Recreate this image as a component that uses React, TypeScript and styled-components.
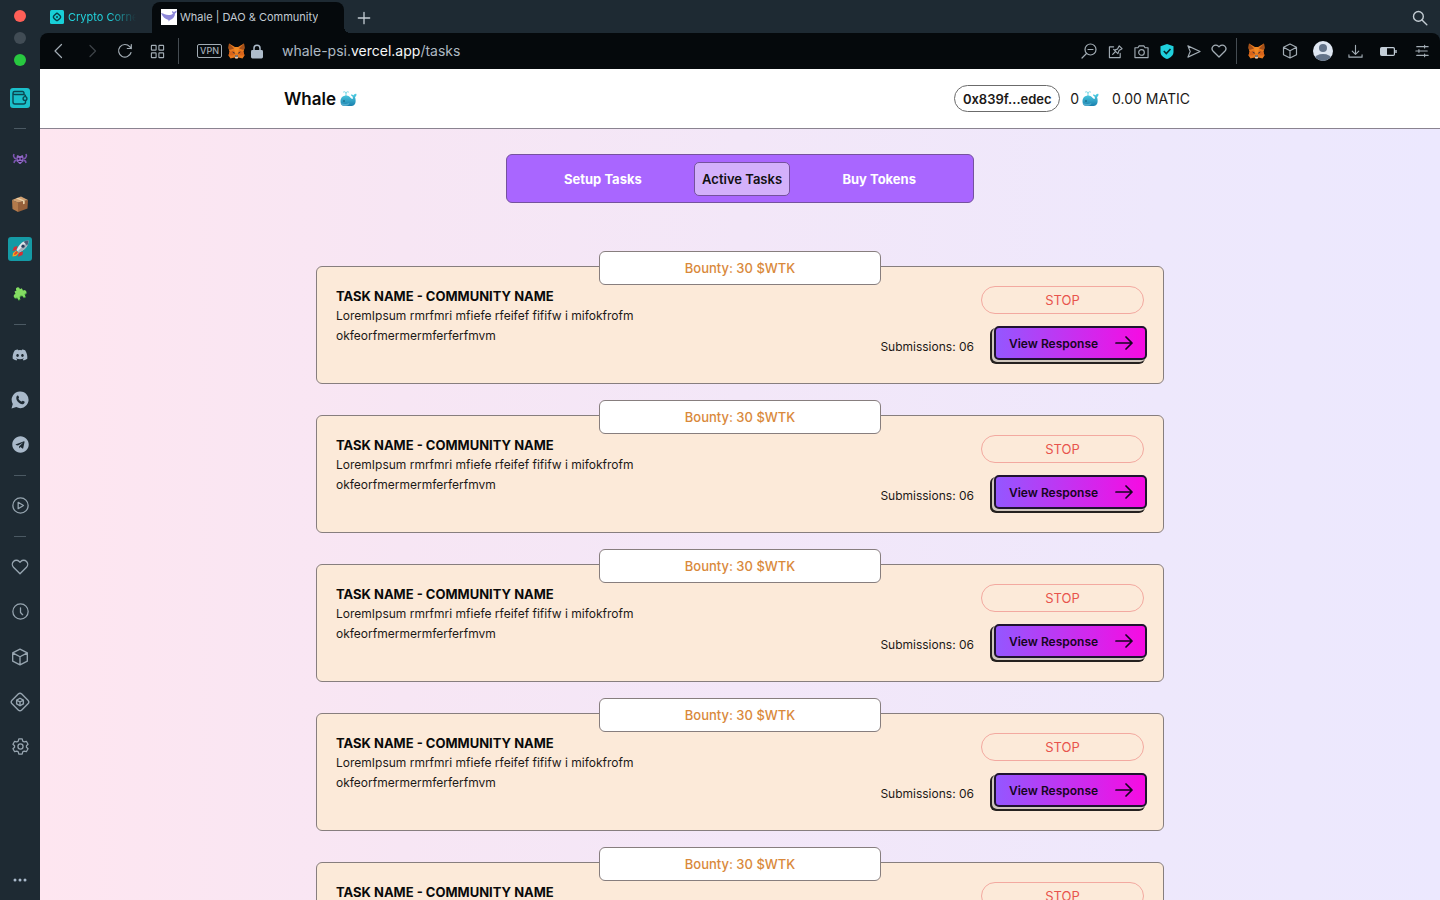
import React from 'react';
import styled, { createGlobalStyle, css } from 'styled-components';
import { FaDiscord, FaTelegram } from 'react-icons/fa';

const GlobalStyle = createGlobalStyle`
  *, *::before, *::after { box-sizing: border-box; }
  body {
    margin: 0;
    font-family: Inter, 'Liberation Sans', sans-serif;
    font-size: 13px;
    color: #1c1917;
    background: #1e2a33;
  }
  button { font: inherit; color: inherit; margin: 0; padding: 0; border: 0; background: none; cursor: pointer; }
  a { color: inherit; text-decoration: none; }
  h1, h2, p, ul { margin: 0; padding: 0; }
  ul { list-style: none; }
  svg { display: block; flex-shrink: 0; }
`;

/* ---------- browser frame ---------- */

const Shell = styled.div`
  display: flex;
  height: 100vh;
  overflow: hidden;
`;

const Rail = styled.aside`
  flex: 0 0 40px;
  display: flex;
  flex-direction: column;
  align-items: center;
  background: #1e2a33;
  color: #97a5b0;
`;

const TrafficLights = styled.div`
  display: flex;
  flex-direction: column;
  gap: 10px;
  padding: 10px 0 9px;
`;

const Light = styled.button<{ $color: string }>`
  width: 12px;
  height: 12px;
  border-radius: 50%;
  background: ${(p) => p.$color};
`;

const RailNav = styled.nav`
  flex: 1;
  display: flex;
  flex-direction: column;
  align-items: center;
  width: 100%;
`;

const RailButton = styled.button`
  display: grid;
  place-items: center;
  width: 40px;
  height: 45px;
`;

const RailTile = styled.span<{ $size: number; $bg: string }>`
  display: grid;
  place-items: center;
  width: ${(p) => p.$size}px;
  height: ${(p) => p.$size}px;
  border-radius: 3px;
  background: ${(p) => p.$bg};
`;

const RailRule = styled.hr`
  width: 12px;
  height: 1px;
  margin: 8px 0 7px;
  border: 0;
  background: #4b5963;
`;

const RailMore = styled(RailButton)`
  height: 40px;
  margin-top: auto;
`;

const Column = styled.div`
  flex: 1;
  min-width: 0;
  display: flex;
  flex-direction: column;
`;

const TabStrip = styled.div`
  flex: 0 0 33px;
  display: flex;
  align-items: flex-end;
  color: #c3ccd3;
  font-size: 11px;
`;

const BrowserTab = styled.a<{ $active?: boolean }>`
  position: relative;
  display: flex;
  align-items: center;
  gap: 4px;
  height: 31px;
  white-space: nowrap;
  ${(p) =>
    p.$active
      ? css`
          width: 192px;
          padding: 0 0 1px 9px;
          gap: 3px;
          border-radius: 8px 8px 0 0;
          background: #05090c;
          &::after {
            content: '';
            position: absolute;
            left: 100%;
            bottom: 0;
            width: 6px;
            height: 6px;
            background: radial-gradient(circle at 100% 0, transparent 6px, #05090c 6px);
          }
        `
      : css`
          width: 112px;
          padding: 0 16px 1px 10px;
          color: #22d3dc;
        `}
`;

const TabTitle = styled.span<{ $fade?: boolean }>`
  overflow: hidden;
  line-height: 20px;
  ${(p) => p.$fade && 'mask-image: linear-gradient(90deg, #000 60%, transparent);'}
`;

const StripButton = styled.button<{ $end?: boolean }>`
  display: grid;
  place-items: center;
  width: 40px;
  height: 31px;
  ${(p) => p.$end && 'margin-left: auto;'}
`;

const Toolbar = styled.div`
  flex: 0 0 36px;
  display: flex;
  align-items: center;
  padding: 0 2px;
  border-radius: 8px 8px 0 0;
  background: #05090c;
  color: #a3adb5;
`;

const ToolButton = styled.button<{ $w: number; $dim?: boolean }>`
  display: grid;
  place-items: center;
  width: ${(p) => p.$w}px;
  height: 32px;
  opacity: ${(p) => (p.$dim ? 0.35 : 1)};
`;

const ToolDivider = styled.span`
  width: 1px;
  height: 26px;
  margin: 0 3px 0 4px;
  background: #454c52;
`;

const VpnBadge = styled.button`
  width: 25px;
  height: 14px;
  margin-left: 15px;
  border: 1px solid #a3adb5;
  border-radius: 2px;
  font-size: 9px;
  font-weight: 500;
  line-height: 12px;
`;

const SiteBadges = styled.div`
  display: flex;
  align-items: center;
  gap: 6px;
  padding: 0 19px 0 6px;
`;

const Address = styled.button`
  flex: 1;
  min-width: 0;
  overflow: hidden;
  text-align: left;
  white-space: nowrap;
  font-size: 14px;
  line-height: 20px;
  color: #aeb9c3;
`;

const Domain = styled.span`
  color: #f5f7f8;
`;

/* ---------- page ---------- */

const Page = styled.div`
  flex: 1;
  overflow-y: auto;
  scrollbar-width: none;
  background: linear-gradient(90deg, #fee6f0 0%, #f7e6f4 26%, #f3e7f8 50%, #eee8fc 80%, #ece8fe 100%);
`;

const PageHeader = styled.header`
  display: flex;
  justify-content: center;
  border-bottom: 1px solid #8a8390;
  background: #fff;
`;

const HeaderInner = styled.div`
  flex: 1;
  max-width: 912px;
  height: 59px;
  display: flex;
  align-items: center;
  justify-content: space-between;
  padding-right: 6px;
`;

const Brand = styled.a`
  display: flex;
  align-items: center;
  gap: 4px;
  font-size: 17px;
  font-weight: 600;
  color: #0a0a0a;
`;

const Account = styled.div`
  display: flex;
  align-items: center;
  font-size: 14px;
`;

const WalletPill = styled.button`
  min-width: 106px;
  height: 27px;
  margin-right: 10px;
  padding: 0 7px;
  border: 1px solid #6b6b6b;
  border-radius: 14px;
  font-size: 13px;
  font-weight: 600;
`;

const Balance = styled.span`
  display: flex;
  align-items: center;
  gap: 3px;
  margin-right: 13px;
`;

const Content = styled.main`
  display: flex;
  flex-direction: column;
  align-items: center;
  padding: 25px 20px 40px;
`;

const TabBar = styled.nav`
  display: flex;
  align-items: center;
  justify-content: space-between;
  width: 100%;
  max-width: 468px;
  padding: 7px 49px 6px;
  border: 1px solid #75529e;
  border-radius: 6px;
  background: #a966ff;
`;

const TaskTab = styled.a<{ $active?: boolean }>`
  padding: 6px 7px;
  border: 1px solid ${(p) => (p.$active ? '#75529e' : 'transparent')};
  border-radius: 5px;
  background: ${(p) => (p.$active ? '#d3b0fb' : 'transparent')};
  color: ${(p) => (p.$active ? '#111' : '#fff')};
  font-weight: ${(p) => (p.$active ? 600 : 700)};
  line-height: 20px;
  text-align: center;
  white-space: nowrap;
`;

const TaskList = styled.ul`
  display: flex;
  flex-direction: column;
  gap: 31px;
  width: 100%;
  max-width: 848px;
  margin-top: 63px;
`;

const TaskCard = styled.li`
  position: relative;
  display: flex;
  justify-content: space-between;
  padding: 19px 19px 20px;
  border: 1px solid #877e7e;
  border-radius: 6px;
  background: #fcead9;
`;

const Bounty = styled.p`
  position: absolute;
  top: -16px;
  left: 50%;
  width: calc(100% / 3);
  height: 34px;
  transform: translateX(-50%);
  border: 1px solid #877e7e;
  border-radius: 6px;
  background: #fff;
  color: #d9893b;
  font-weight: 500;
  line-height: 33px;
  text-align: center;
`;

const TaskText = styled.div`
  flex: 0 1 50%;
  line-height: 20px;
`;

const TaskTitle = styled.h2`
  font-size: 13px;
  font-weight: 700;
  color: #0a0a0a;
`;

const TaskBody = styled.p`
  font-size: 12px;
`;

const TaskSide = styled.div`
  display: flex;
  flex-direction: column;
  align-items: flex-end;
  gap: 15px;
  font-size: 12px;
`;

const StopButton = styled.button`
  width: 163px;
  height: 28px;
  border: 1px solid #f3a9a0;
  border-radius: 14px;
  color: #e8544c;
  font-size: 13px;
`;

const SideRow = styled.div`
  display: flex;
  align-items: center;
  gap: 17px;
`;

const ResponseButton = styled.button`
  display: flex;
  align-items: center;
  justify-content: space-between;
  width: 153px;
  height: 34px;
  padding: 0 12px 0 13px;
  transform: translate(3px, -3px);
  border: 2px solid #1f1330;
  border-radius: 5px;
  background: linear-gradient(90deg, #9457ff, #f70be2);
  box-shadow: -1px 1px 0 #cfc6bd, -2px 2px 0 #cfc6bd, -3px 3px 0 1px #25211f;
  color: #16051f;
  font-weight: 600;
`;

/* ---------- drawings ---------- */

type IconProps = { size?: number; w?: number; children: React.ReactNode };

const Line = ({ size = 16, w = 1.2, children }: IconProps) => (
  <svg width={size} height={size} viewBox="0 0 16 16" fill="none" stroke="currentColor" strokeWidth={w} strokeLinecap="round" strokeLinejoin="round" aria-hidden="true">
    {children}
  </svg>
);

const HEART = 'M8 14 2.2 8.2a3.7 3.7 0 0 1 0-5.1 3.6 3.6 0 0 1 5.1 0L8 3.8l.7-.7a3.6 3.6 0 0 1 5.1 0 3.7 3.7 0 0 1 0 5.1Z';

const Heart = ({ size, w }: { size: number; w?: number }) => (
  <Line size={size} w={w}><path d={HEART} /></Line>
);

const Cube = ({ size, w }: { size: number; w?: number }) => (
  <Line size={size} w={w}>
    <path d="M8 1 14.5 4.3v7.4L8 15l-6.5-3.3V4.3ZM1.5 4.3 8 7.8l6.5-3.5M8 7.8V15" />
  </Line>
);

const Magnifier = () => (
  <Line size={16} w={1.4}><circle cx="6.4" cy="6.4" r="4.9" /><path d="m10 10 4.8 4.8" /></Line>
);

const Whale = () => (
  <svg width="17" height="17" viewBox="0 0 34 34" aria-hidden="true">
    <defs>
      <linearGradient id="whale-skin" x1="0" y1="0" x2="0" y2="1">
        <stop offset="0" stopColor="#4fd0e4" />
        <stop offset="1" stopColor="#1a7fae" />
      </linearGradient>
    </defs>
    <path d="M12 12V5M12 6C11 3 9 3 7 4M12 6c1-3 3-3 5-2" fill="none" stroke="#7fdbe8" strokeWidth="2" strokeLinecap="round" />
    <path d="M1 23C1 15 6 11 13 11c6 0 8 6 12 7 1-1 1-3 0-5-2-1-3-2-3-4 2 0 4 0 5 2 1-2 3-4 6-3 0 3-1 5-3 6 3 9 1 18-7 18H9C4 32 1 29 1 23Z" fill="url(#whale-skin)" />
    <path d="M2 26c5 2 10 3 17 0-1 4-4 6-9 6-4 0-7-2-8-6Z" fill="#7fd0e6" opacity=".5" />
    <circle cx="8" cy="22" r="1.3" fill="#073b55" />
  </svg>
);

const Fox = () => (
  <svg width="17" height="16" viewBox="0 0 34 32" aria-hidden="true">
    <path d="M2 1 14 8h6L32 1l1 9-2 8 2 7-4 6-8-2-2 2h-4l-2-2-8 2-4-6 2-7L1 10Z" fill="#e8791f" />
    <path d="m2 1 10 10-9 3-2-4ZM32 1 22 11l9 3 2-4Z" fill="#a4501a" />
    <path d="m12 11 2-3h6l2 3-2 9h-6Z" fill="#f08a24" />
    <path d="m3 18 9-3 2 7-5 3-8 0ZM31 18l-9-3-2 7 5 3h8Z" fill="#d9641a" />
    <path d="m8 17 5 2 0 3ZM26 17l-5 2 0 3Z" fill="#26303f" />
    <path d="m14 26 1-2h4l1 2v3l-1 2h-4l-1-2Z" fill="#d8cfc8" />
    <path d="M14 25h6v2h-6Z" fill="#222" />
  </svg>
);

const Lock = () => (
  <svg width="12" height="15" viewBox="0 0 12 15" aria-hidden="true">
    <path d="M3 7V4.2a3 3 0 0 1 6 0V7" fill="none" stroke="#aebccb" strokeWidth="1.5" />
    <rect x="0" y="6" width="12" height="8.5" rx="1.4" fill="#aebccb" />
  </svg>
);

const TealFavicon = () => (
  <svg width="14" height="14" viewBox="0 0 14 14" aria-hidden="true">
    <rect width="14" height="14" rx="1.5" fill="#18cfd8" />
    <rect x="4" y="4" width="6" height="6" rx="1.6" transform="rotate(45 7 7)" fill="none" stroke="#083c46" strokeWidth="1.4" />
    <circle cx="7" cy="7" r="1" fill="#083c46" />
  </svg>
);

const WhaleFavicon = () => (
  <svg width="16" height="16" viewBox="0 0 16 16" aria-hidden="true">
    <rect width="16" height="16" fill="#fff" />
    <path d="M0 4c3 .5 4.500 2 7.500 2 2 0 3.500-.500 4.500-1.500-.800-.500-1-1.500-1-2.500l2 1 2.500-1.500c.500 1.500-.500 2.500-1.500 3 0 3-2 5.500-5 6.500l-1.500 1.500L7.500 11C4 10 2 8 0 4Z" fill="#8d87d8" />
  </svg>
);

const Wallet = () => (
  <svg width="16" height="16" viewBox="0 0 16 16" fill="none" stroke="#0b4651" strokeWidth="1.4" strokeLinejoin="round" aria-hidden="true">
    <path d="M12 4.500V3a1.500 1.500 0 0 0-1.500-1.500H2.600A1.600 1.600 0 0 0 1 3v9a2 2 0 0 0 2 2h8.500a2 2 0 0 0 2-2v-1.500M1 3a1.600 1.600 0 0 0 1.600 1.500h8.900a2 2 0 0 1 2 2" />
    <circle cx="13" cy="8.500" r="1.900" />
  </svg>
);

const Invader = () => (
  <svg width="16" height="14" viewBox="0 0 16 14" aria-hidden="true">
    <path d="M5 3.500 6 3l1 1h2l1-1 1 .500.500 2V9l-1.500 1.500L8.500 12h-1L6 10.500 4.500 9V5.500Z" fill="#8f68c4" />
    <path d="M4.500 7 2.500 6 1.500 4 2 2M4.500 8.500 2.500 9 2 11M11.500 7l2-1 1-2L14 2M11.500 8.500l2 .500.500 2" fill="none" stroke="#7d55b3" strokeWidth="1.500" strokeLinejoin="round" />
    <circle cx="6.500" cy="6.800" r="1" fill="#24143d" /><circle cx="9.500" cy="6.800" r="1" fill="#24143d" />
    <path d="M6.500 9.500h3" stroke="#24143d" />
  </svg>
);

const Parcel = () => (
  <svg width="16" height="16" viewBox="0 0 16 16" aria-hidden="true">
    <path d="m0 4 6 2.500v9.500L.500 13Z" fill="#b37a4b" />
    <path d="m6 6.500 10-2.500-.500 8.500L6 16Z" fill="#96603a" />
    <path d="m0 4 9-3.500L16 4 6 6.500Z" fill="#d3a273" />
    <path d="m4 2.400 7 2.800v3l1.700-.400V4.800L6 1.700Z" fill="#ecd2a8" />
  </svg>
);

const Rocket = () => (
  <svg width="17" height="17" viewBox="0 0 17 17" aria-hidden="true">
    <path d="M5.500 6 2 7 .500 11l4-1ZM11 11.500l-.500 3.500L6 16.800l1-4.300Z" fill="#d62f35" />
    <path d="m4 10.500-3 2.500-.500 3.500L4 16l3-3Z" fill="#f6a623" />
    <path d="m4.500 11-2 2-.500 2 2-.500 2-2Z" fill="#e2452f" />
    <path d="M16.500.500c-5 0-9 3-12 9.500l2.500 2.500c6.500-3 9.500-7 9.500-12Z" fill="#dfe5ea" />
    <path d="M16.500.500c0 5-3 9-9.500 12L5.700 11.200Z" fill="#a3aeb9" />
    <path d="M16.500.500c-2 0-3.500.500-5 1.300L15.200 5.500c.800-1.500 1.300-3 1.300-5Z" fill="#4a5b78" />
    <circle cx="11" cy="6.200" r="1.600" fill="#253a5b" />
  </svg>
);

const Puzzle = () => (
  <svg width="18" height="18" viewBox="0 0 18 18" aria-hidden="true">
    <g transform="rotate(-24 9 9)">
      <path d="M5 4.500h2.300a1.900 1.900 0 1 1 3.400 0H13v2.800a1.900 1.900 0 1 1 0 3.400v2.800h-2.300a1.900 1.900 0 1 0-3.400 0H5v-2.800a1.900 1.900 0 1 1 0-3.400Z" fill="#3f9d3c" transform="translate(0 1)" />
      <path d="M5 4.500h2.300a1.900 1.900 0 1 1 3.400 0H13v2.800a1.900 1.900 0 1 1 0 3.400v2.800h-2.300a1.900 1.900 0 1 0-3.400 0H5v-2.800a1.900 1.900 0 1 1 0-3.400Z" fill="#83dc62" />
    </g>
  </svg>
);

const ChatPhone = () => (
  <svg width="18" height="18" viewBox="0 0 18 18" aria-hidden="true">
    <path d="M9.300.500a8.300 8.300 0 1 1-4 15.600L.500 17.500l1.300-4.600A8.300 8.300 0 0 1 9.300.500Z" fill="#a9b9ca" />
    <path d="M6.400 4.500c.600-.200.900.100 1.100.600l.500 1.300c.200.500-.700 1-.600 1.400.700 1.300 1.700 2.200 3 2.800.500.100 1-1 1.400-.800l1.600.800c.700.400 0 2-1 2.400-2 .800-4.700-1-6-2.800C5 8.300 4.800 5.500 6.400 4.500Z" fill="#1e2a33" />
  </svg>
);

const Arrow = () => (
  <svg width="18" height="14" viewBox="0 0 18 14" fill="none" stroke="currentColor" strokeWidth="1.700" strokeLinecap="round" strokeLinejoin="round" aria-hidden="true">
    <path d="M1 7h16M11 1l6 6-6 6" />
  </svg>
);

const Gear = () => (
  <Line size={17} w={1.2}>
    <circle cx="8" cy="8" r="2.400" />
    <path d="M6.400.900h3.200l.500 2 1.400.800 2-.600 1.600 2.800L13.600 7.300v1.400l1.500 1.400-1.600 2.800-2-.600-1.400.800-.500 2H6.400l-.500-2-1.400-.800-2 .600L.900 10.100l1.500-1.400V7.300L.900 5.900l1.600-2.800 2 .600 1.400-.800Z" />
  </Line>
);

const Avatar = () => (
  <svg width="20" height="20" viewBox="0 0 20 20" aria-hidden="true">
    <defs><clipPath id="avatar-disc"><circle cx="10" cy="10" r="10" /></clipPath></defs>
    <g clipPath="url(#avatar-disc)">
      <rect width="20" height="20" fill="#dfe7f2" />
      <circle cx="10" cy="7" r="4" fill="#64748a" />
      <ellipse cx="10" cy="18" rx="8.500" ry="5" fill="#64748a" />
    </g>
  </svg>
);

/* ---------- data ---------- */

type Entry = { label: string; icon: React.ReactNode; dim?: boolean };

const railGroups: Entry[][] = [
  [{ label: 'Crypto wallet', icon: <RailTile $size={20} $bg="#1bbfca"><Wallet /></RailTile> }],
  [
    { label: 'Games workspace', icon: <Invader /> },
    { label: 'Packages workspace', icon: <Parcel /> },
    { label: 'Launch workspace', icon: <RailTile $size={24} $bg="#159aa5"><Rocket /></RailTile> },
    { label: 'Extensions workspace', icon: <Puzzle /> },
  ],
  [
    { label: 'Discord', icon: <FaDiscord size={16} color="#a9b9ca" /> },
    { label: 'WhatsApp', icon: <ChatPhone /> },
    { label: 'Telegram', icon: <FaTelegram size={17} color="#a9b9ca" /> },
  ],
  [{ label: 'Player', icon: <Line size={17} w={1.2}><circle cx="8" cy="8" r="7.200" /><path d="M5.800 5v6l5-3Z" /></Line> }],
  [
    { label: 'Bookmarks', icon: <Heart size={18} w={1.2} /> },
    { label: 'History', icon: <Line size={17} w={1.2}><circle cx="8" cy="8" r="7.200" /><path d="M8 4.500V9l2 2" /></Line> },
    { label: 'Extensions', icon: <Cube size={18} w={1.2} /> },
    {
      label: 'Crypto corner',
      icon: (
        <Line size={20} w={1.1}>
          <rect x="2.500" y="2.500" width="11" height="11" rx="2" transform="rotate(45 8 8)" />
          <path d="m8 5 2.700 1.500v3L8 11 5.300 9.500v-3ZM5.300 6.500 8 8l2.700-1.500M8 8v3" />
        </Line>
      ),
    },
    { label: 'Settings', icon: <Gear /> },
  ],
];

const navTools: Entry[] = [
  { label: 'Back', icon: <Line w={1.2}><path d="M10.500 1.500 4 8l6.500 6.500" /></Line> },
  { label: 'Forward', icon: <Line w={1.2}><path d="M6 2.500 11.500 8 6 13.500" /></Line>, dim: true },
  { label: 'Reload', icon: <Line w={1.2}><path d="M14 9.500A6.300 6.300 0 1 1 12.700 3.700L14.300 5.500M14.300 1.500v4h-4" /></Line> },
  {
    label: 'Speed dial',
    icon: <Line size={15} w={1.2}><rect x="1.500" y="1.500" width="5" height="5" rx=".5" /><rect x="9.500" y="1.500" width="5" height="5" rx=".5" /><rect x="1.500" y="9.500" width="5" height="5" rx=".5" /><rect x="9.500" y="9.500" width="5" height="5" rx=".5" /></Line>,
  },
];

const pageTools: Entry[] = [
  { label: 'Reset zoom', icon: <Line size={16} w={1.2}><circle cx="9.500" cy="6.500" r="5.500" /><path d="M5.500 10.500 1 15M7 6.500h5" /></Line> },
  {
    label: 'Pin page',
    icon: <Line size={15} w={1.2}><path d="M6 3H1.500v11.500H13V10M5 11l3-3M6 5.800 10.500 10.200M7 6.500l3-1L12 2l3 3-3.300 2-1 3" /></Line>,
  },
  { label: 'Snapshot', icon: <Line size={15} w={1.2}><path d="M1 4h3.200L5.500 2h5l1.300 2H15v10.500H1Z" /><circle cx="8" cy="9" r="3" /></Line> },
  {
    label: 'Ad blocker',
    icon: (
      <svg width="14" height="15" viewBox="0 0 14 15" aria-hidden="true">
        <path d="M7 0 13.500 2.300V8c0 3-2.500 5.500-6.500 7C3 13.500.500 11 .500 8V2.300Z" fill="#1fd0dc" />
        <path d="m3.800 7 2.500 2.500L10.500 5" fill="none" stroke="#05272c" strokeWidth="1.600" />
      </svg>
    ),
  },
  { label: 'My Flow', icon: <Line size={15} w={1.2}><path d="m2 2 13 6-13 6 2.500-6Z" /></Line> },
  { label: 'Add to bookmarks', icon: <Heart size={16} w={1.3} /> },
];

const appTools: Entry[] = [
  { label: 'MetaMask', icon: <Fox /> },
  { label: 'Extensions menu', icon: <Cube size={16} w={1.2} /> },
  { label: 'Profile', icon: <Avatar /> },
  { label: 'Downloads', icon: <Line size={15} w={1.2}><path d="M8 1.500v9M4.500 7.500 8 11l3.500-3.500M1 11.500v2.500h14v-2.500" /></Line> },
  {
    label: 'Battery saver',
    icon: (
      <svg width="17" height="9" viewBox="0 0 17 9" aria-hidden="true">
        <rect x=".6" y=".6" width="13.800" height="7.800" rx="1.200" fill="none" stroke="#c3ced8" strokeWidth="1.200" />
        <path d="M1 1h6v7H1Z" fill="#c3ced8" />
        <path d="M16 3v3" stroke="#c3ced8" strokeWidth="1.400" />
      </svg>
    ),
  },
  { label: 'Easy setup', icon: <Line size={14} w={1.3}><path d="M2 3h13M1 8h13M2 13h13M11 1.500v3M4.500 6.500v3M11 11.500v3" /></Line> },
];

const taskTabs = ['Setup Tasks', 'Active Tasks', 'Buy Tokens'];

const tasks = Array.from({ length: 5 }, (_, id) => ({
  id,
  bounty: 30,
  title: 'TASK NAME - COMMUNITY NAME',
  body: 'LoremIpsum rmrfmri mfiefe rfeifef fififw i mifokfrofm okfeorfmermermferferfmvm',
  submissions: '06',
}));

const Tools = ({ items, width }: { items: Entry[]; width: number }) => (
  <>
    {items.map((t) => (
      <ToolButton key={t.label} $w={width} $dim={t.dim} aria-label={t.label}>{t.icon}</ToolButton>
    ))}
  </>
);

export default function App() {
  return (
    <Shell>
      <GlobalStyle />
      <Rail>
        <TrafficLights>
          <Light $color="#ff5f57" aria-label="Close" />
          <Light $color="#414c55" aria-label="Minimize" />
          <Light $color="#28c840" aria-label="Zoom" />
        </TrafficLights>
        <RailNav aria-label="Sidebar">
          {railGroups.map((group, i) => (
            <React.Fragment key={group[0].label}>
              {i > 0 && <RailRule />}
              {group.map((e) => (
                <RailButton key={e.label} aria-label={e.label}>{e.icon}</RailButton>
              ))}
            </React.Fragment>
          ))}
          <RailMore aria-label="More">
            <svg width="14" height="4" viewBox="0 0 14 4" fill="#a9b9ca" aria-hidden="true">
              <circle cx="2" cy="2" r="1.500" /><circle cx="7" cy="2" r="1.500" /><circle cx="12" cy="2" r="1.500" />
            </svg>
          </RailMore>
        </RailNav>
      </Rail>

      <Column>
        <TabStrip>
          <BrowserTab href="#crypto">
            <TealFavicon />
            <TabTitle $fade>Crypto Corner</TabTitle>
          </BrowserTab>
          <BrowserTab href="#whale" $active>
            <WhaleFavicon />
            <TabTitle>Whale | DAO &amp; Community</TabTitle>
          </BrowserTab>
          <StripButton aria-label="New tab">
            <Line size={14} w={1.5}><path d="M8 1.500v13M1.500 8h13" /></Line>
          </StripButton>
          <StripButton $end aria-label="Search tabs"><Magnifier /></StripButton>
        </TabStrip>

        <Toolbar>
          <Tools items={navTools} width={33} />
          <ToolDivider />
          <VpnBadge>VPN</VpnBadge>
          <SiteBadges><Fox /><Lock /></SiteBadges>
          <Address aria-label="Page address">
            whale-psi.<Domain>vercel.app</Domain>/tasks
          </Address>
          <Tools items={pageTools} width={26} />
          <ToolDivider />
          <Tools items={appTools} width={33} />
        </Toolbar>

        <Page>
          <PageHeader>
            <HeaderInner>
              <Brand href="#home">Whale <Whale /></Brand>
              <Account>
                <WalletPill>0x839f...edec</WalletPill>
                <Balance>0 <Whale /></Balance>
                <span>0.00 MATIC</span>
              </Account>
            </HeaderInner>
          </PageHeader>
          <Content>
            <TabBar aria-label="Tasks">
              {taskTabs.map((t) => (
                <TaskTab key={t} href="#tasks" $active={t === 'Active Tasks'}>{t}</TaskTab>
              ))}
            </TabBar>
            <TaskList>
              {tasks.map((t) => (
                <TaskCard key={t.id}>
                  <Bounty>Bounty: {t.bounty} $WTK</Bounty>
                  <TaskText>
                    <TaskTitle>{t.title}</TaskTitle>
                    <TaskBody>{t.body}</TaskBody>
                  </TaskText>
                  <TaskSide>
                    <StopButton>STOP</StopButton>
                    <SideRow>
                      <span>Submissions: {t.submissions}</span>
                      <ResponseButton>View Response <Arrow /></ResponseButton>
                    </SideRow>
                  </TaskSide>
                </TaskCard>
              ))}
            </TaskList>
          </Content>
        </Page>
      </Column>
    </Shell>
  );
}
